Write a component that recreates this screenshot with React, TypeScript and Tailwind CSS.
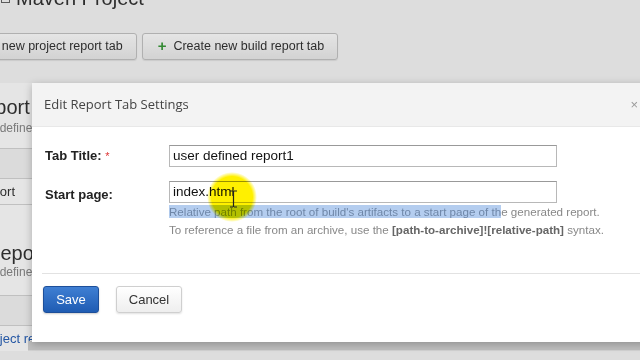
import React from "react";

const SANS = "font-['Liberation_Sans',Arial,sans-serif]";

function PageButton({ children, className = "" }: { children: React.ReactNode; className?: string }) {
  return (
    <button
      className={[
        "h-[27px] pl-[15px] pr-[13px] inline-flex items-center gap-[7px] rounded-[3px] border border-[#c4c4c4] bg-gradient-to-b from-[#ffffff] to-[#ebebeb] text-[12.5px] text-[#333] shadow-[0_1px_1px_rgba(0,0,0,0.08)] whitespace-nowrap",
        className,
      ].join(" ")}
    >
      {children}
    </button>
  );
}

function YellowSpot() {
  // screen-recorder cursor highlight
  return (
    <div className="absolute left-[207px] top-[172px] w-[50px] h-[50px] pointer-events-none mix-blend-multiply">
      <svg width="50" height="50" viewBox="0 0 50 50">
        <defs>
          <radialGradient id="spot" cx="50%" cy="50%" r="50%">
            <stop offset="0%" stopColor="#fff000" />
            <stop offset="82%" stopColor="#fff000" />
            <stop offset="100%" stopColor="#fff000" stopOpacity="0" />
          </radialGradient>
        </defs>
        <circle cx="25" cy="25" r="25" fill="url(#spot)" />
      </svg>
    </div>
  );
}

function IBeam() {
  return (
    <svg className="absolute left-[229px] top-[190px] pointer-events-none" width="9" height="18" viewBox="0 0 9 18">
      <path d="M1 1h3M5 1h3M4.5 1v16M1 17h3M5 17h3" stroke="#222" strokeWidth="1.2" fill="none" />
    </svg>
  );
}

function EditDialog() {
  return (
    <div className="absolute left-[32px] top-[83px] w-[622px] h-[259px] bg-white shadow-[0_2px_8px_rgba(0,0,0,0.25)] flex flex-col">
      <div className="h-[44px] shrink-0 bg-[#f3f3f3] border-b border-[#e8e8e8] flex items-center justify-between pl-[12px] pr-[16px]">
        <span className="font-['Open_Sans',sans-serif] text-[13px] text-[#444]">Edit Report Tab Settings</span>
        <span className="text-[13px] text-[#9a9a9a] leading-none">×</span>
      </div>

      <div className={`${SANS} pt-[18px]`}>
        <div className="flex items-center">
          <div className="w-[137px] pl-[13px] text-[13px] font-bold text-[#222]">
            Tab Title: <span className="text-[#d33] font-normal text-[11px]">*</span>
          </div>
          <div className="w-[388px] h-[22px] border border-[#b8b8b8] border-t-[#999] flex items-center pl-[3px] text-[13.5px] text-[#111]">
            user defined report1
          </div>
        </div>

        <div className="flex items-start mt-[14px]">
          <div className="w-[137px] pl-[13px] pt-[4px] text-[13px] font-bold text-[#222]">Start page:</div>
          <div className="flex flex-col">
            <div className="w-[388px] h-[22px] border border-[#b8b8b8] border-t-[#999] flex items-center pl-[3px] text-[13.5px] text-[#111]">
              index.html
            </div>
            <div className="text-[11.6px] leading-[18px] text-[#888] whitespace-nowrap">
              <div>
                <span className="bg-[#b4cdef] text-[#6f87a8]">
                  Relative path from the root of build's artifacts to a start page of th
                </span>
                e generated report.
              </div>
              <div>
                To reference a file from an archive, use the{" "}
                <span className="font-bold text-[#666]">[path-to-archive]![relative-path]</span> syntax.
              </div>
            </div>
          </div>
        </div>

        <div className="mt-[34px] ml-[10px] border-t border-[#e2e2e2]" />

        <div className="flex items-center gap-[17px] mt-[12px] pl-[11px]">
          <button className="w-[56px] h-[27px] rounded-[3px] border border-[#1d4f9a] bg-gradient-to-b from-[#3f7fd3] to-[#1f5cb3] text-white text-[13px] shadow-[0_1px_2px_rgba(0,0,0,0.2)]">
            Save
          </button>
          <button className="w-[66px] h-[27px] rounded-[3px] border border-[#cfcfcf] bg-gradient-to-b from-[#ffffff] to-[#eeeeee] text-[#333] text-[13px] shadow-[0_1px_2px_rgba(0,0,0,0.12)]">
            Cancel
          </button>
        </div>
      </div>
    </div>
  );
}

export default function App() {
  return (
    <div className={`${SANS} relative w-[640px] h-[360px] overflow-hidden bg-[#f6f6f6]`}>
      {/* page behind the dialog */}
      <div className="flex flex-col">
        <div className="-mt-[14px] h-[24px] flex items-center gap-[6px] pl-[1px] text-[20px] leading-[24px] text-[#333]">
          <span className="inline-block w-[9px] h-[10px] border border-[#666]" />
          Maven Project
        </div>

        <div className="flex items-center gap-[5px] mt-[23px] -ml-[71px]">
          <PageButton>
            <span className="text-[#3a9a3a] font-bold text-[15px]">+</span> Create new project report tab
          </PageButton>
          <PageButton>
            <span className="text-[#3a9a3a] font-bold text-[15px]">+</span> Create new build report tab
          </PageButton>
        </div>

        <div className="mt-[23px] bg-white">
          <div className="pt-[13px] overflow-hidden">
            <div className="-ml-[98px] text-[20px] leading-[22px] text-[#333] whitespace-nowrap">Project Report Tabs</div>
            <div className="-ml-[29px] mt-[2px] text-[12px] leading-[16px] text-[#888] whitespace-nowrap">User defined project tabs</div>
          </div>
          <div className="mt-[12px] border-t border-[#d6d6d6] h-[30px] bg-[#f4f4f4]" />
          <div className="border-t border-b border-[#d6d6d6] h-[27px] flex items-center overflow-hidden">
            <span className="-ml-[24px] text-[13px] text-[#333] whitespace-nowrap">Report</span>
          </div>

          <div className="pt-[37px] overflow-hidden">
            <div className="-ml-[64px] text-[20px] leading-[22px] text-[#333] whitespace-nowrap">Build Report Tabs</div>
            <div className="-ml-[29px] text-[12px] leading-[16px] text-[#888] whitespace-nowrap">User defined build tabs</div>
          </div>
          <div className="mt-[15px] border-t border-[#d6d6d6] h-[30px] bg-[#f4f4f4]" />
          <div className="flex h-[26px] border-t border-[#d6d6d6]">
            <div className="w-[28px] flex items-center overflow-visible">
              <span className="-ml-[19px] text-[13px] text-[#2a62b8] whitespace-nowrap">project report</span>
            </div>
            <div className="flex-1 flex flex-col justify-end">
              <div className="h-[10px] bg-[#d4d4d4] border-b border-[#e8e8e8]" />
            </div>
          </div>
        </div>
      </div>

      {/* modal backdrop */}
      <div className="absolute inset-0 bg-[rgba(0,0,0,0.1)]" />

      <EditDialog />
      <YellowSpot />
      <IBeam />
    </div>
  );
}
